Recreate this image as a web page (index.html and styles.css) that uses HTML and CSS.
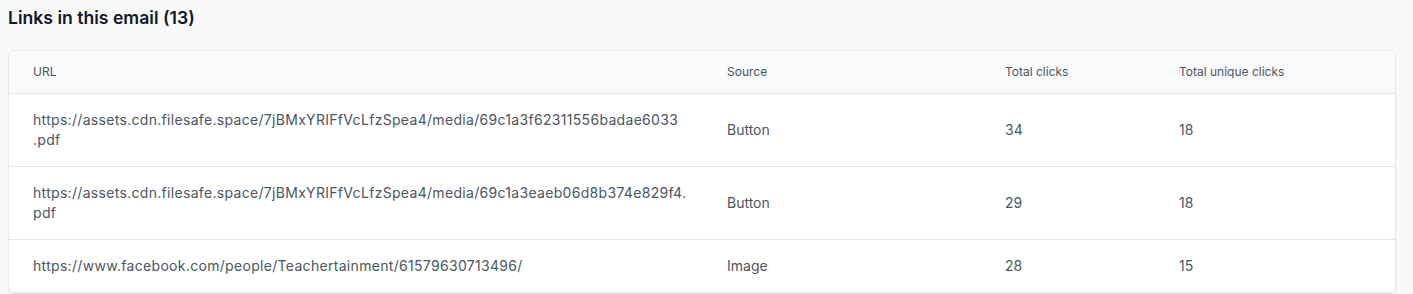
FILE: index.html
```html
<!DOCTYPE html>
<html lang="en">
<head>
    <meta charset="UTF-8">
    <meta name="viewport" content="width=device-width, initial-scale=1.0">
    <title>Links in this email</title>
    <link rel="stylesheet" href="styles.css">
</head>
<body>
    <div class="links-section">
        <h2 class="section-title">Links in this email (13)</h2>
        <div class="table-card">
            <table class="links-table">
                <colgroup>
                    <col class="col-url">
                    <col class="col-source">
                    <col class="col-clicks">
                    <col class="col-unique">
                </colgroup>
                <thead>
                    <tr>
                        <th>URL</th>
                        <th>Source</th>
                        <th>Total clicks</th>
                        <th>Total unique clicks</th>
                    </tr>
                </thead>
                <tbody>
                    <tr>
                        <td class="url">https://assets.cdn.filesafe.space/7jBMxYRIFfVcLfzSpea4/media/69c1a3f62311556badae6033<wbr>.pdf</td>
                        <td>Button</td>
                        <td>34</td>
                        <td>18</td>
                    </tr>
                    <tr>
                        <td class="url">https://assets.cdn.filesafe.space/7jBMxYRIFfVcLfzSpea4/media/69c1a3eaeb06d8b374e829f4.<wbr>pdf</td>
                        <td>Button</td>
                        <td>29</td>
                        <td>18</td>
                    </tr>
                    <tr>
                        <td class="url">https://www.facebook.com/people/Teachertainment/61579630713496/</td>
                        <td>Image</td>
                        <td>28</td>
                        <td>15</td>
                    </tr>
                </tbody>
            </table>
        </div>
    </div>
</body>
</html>
```

FILE: styles.css
```css
body {
    font-family: Inter, "Noto Sans", sans-serif;
    background-color: #f8f9fb;
    color: #4b5563;
    margin: 0;
    padding: 0;
}

.links-section {
    padding: 8px 17px 0 8px;
}

.section-title {
    font-size: 17.6px;
    font-weight: 600;
    line-height: 20px;
    color: #111827;
    margin: 0 0 22px 0;
}

.table-card {
    background-color: #ffffff;
    border: 1px solid #e5e7eb;
    border-radius: 6px;
    box-shadow: 0 1px 2px rgba(16, 24, 40, 0.06);
    overflow: hidden;
}

.links-table {
    width: 100%;
    border-collapse: collapse;
    table-layout: fixed;
}

.col-url {
    width: 694px;
}
.col-source {
    width: 278px;
}
.col-clicks {
    width: 174px;
}

.links-table th {
    text-align: left;
    font-size: 12px;
    font-weight: 400;
    line-height: 18px;
    color: #4b5563;
    background-color: #f9fafb;
    padding: 12px 24px;
    border-bottom: 1px solid #e5e7eb;
}

.links-table td {
    font-size: 14px;
    line-height: 20px;
    color: #4b5563;
    padding: 16px 24px;
    border-bottom: 1px solid #e5e7eb;
    vertical-align: middle;
}

/* long urls wrap only where the <wbr> says, unless they really overflow */
.links-table td.url {
    padding-right: 14px;
    overflow-wrap: anywhere;
    letter-spacing: 0.31px;
}
```
